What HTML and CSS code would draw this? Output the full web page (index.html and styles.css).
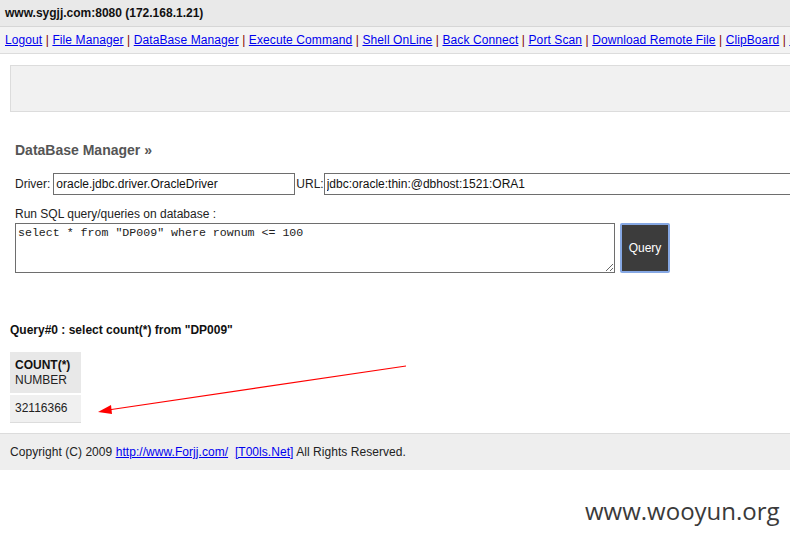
FILE: index.html
```html
<!DOCTYPE html>
<html>
<head>
<meta charset="utf-8">
<link rel="stylesheet" href="styles.css">
</head>
<body>
<div class="topbar">www.sygjj.com:8080 (172.168.1.21)</div>
<div class="nav"><a href="#">Logout</a> <span class="sep">|</span> <a href="#">File Manager</a> <span class="sep">|</span> <a href="#">DataBase Manager</a> <span class="sep">|</span> <a href="#">Execute Command</a> <span class="sep">|</span> <a href="#">Shell OnLine</a> <span class="sep">|</span> <a href="#">Back Connect</a> <span class="sep">|</span> <a href="#">Port Scan</a> <span class="sep">|</span> <a href="#">Download Remote File</a> <span class="sep">|</span> <a href="#">ClipBoard</a> <span class="sep">|</span> <a href="#">Port Map</a></div>
<div class="box"></div>
<div class="form">
  <h2 class="title">DataBase Manager &raquo;</h2>
  <div class="row">
    <label>Driver:</label><input class="in driver" type="text" value="oracle.jdbc.driver.OracleDriver"><label>URL:</label><input class="in url" type="text" value="jdbc:oracle:thin:@dbhost:1521:ORA1">
  </div>
  <div class="label">Run SQL query/queries on database :</div>
  <div class="sqlrow">
    <textarea class="sql">select * from "DP009" where rownum &lt;= 100</textarea>
    <button class="btn">Query</button>
  </div>
</div>
<div class="result">
  <div class="qtitle">Query#0 : select count(*) from "DP009"</div>
  <table class="grid">
    <tr><th><b>COUNT(*)</b><br><span class="type">NUMBER</span></th></tr>
    <tr><td>32116366</td></tr>
  </table>
</div>
<div class="footer">Copyright (C) 2009 <a href="#">http://www.Forjj.com/</a>&nbsp; <a href="#">[T00ls.Net]</a> All Rights Reserved.</div>
<svg class="arrow" width="790" height="541" viewBox="0 0 790 541">
  <line x1="406" y1="366" x2="108" y2="410" stroke="#ff0000" stroke-width="1.2"/>
  <polygon points="98,412 111,405 112,414" fill="#ff0000"/>
</svg>
<div class="watermark">www.wooyun.org</div>
</body>
</html>
```
FILE: styles.css
```css
html, body {
  margin: 0;
  padding: 0;
  background: #fff;
  overflow: hidden;
}
body {
  font-family: "Liberation Sans", Arial, sans-serif;
  font-size: 12px;
  color: #222;
  width: 790px;
  height: 541px;
  position: relative;
}
.topbar {
  height: 26px;
  line-height: 26px;
  padding-left: 5px;
  background: #e9e9e9;
  border-bottom: 1px solid #d6d6d6;
  font-weight: bold;
  color: #111;
  white-space: nowrap;
}
.nav {
  height: 26px;
  line-height: 27px;
  padding-left: 5px;
  background: #f3f3f3;
  border-bottom: 1px solid #dcdcdc;
  white-space: nowrap;
  overflow: hidden;
  letter-spacing: 0.1px;
}
a {
  color: #0000ee;
  text-decoration: underline;
}
.sep {
  color: #800000;
}
.box {
  margin: 11px 0 0 10px;
  height: 45px;
  background: #f1f1f1;
  border: 1px solid #dcdcdc;
  border-right: none;
}
.form {
  padding-left: 15px;
}
.title {
  margin: 30px 0 0 0;
  font-size: 14px;
  line-height: 16px;
  font-weight: bold;
  color: #555;
}
.row {
  margin-top: 15px;
  display: flex;
  align-items: center;
  white-space: nowrap;
  height: 22px;
  overflow: hidden;
}
.row label {
  color: #222;
  flex: none;
}
.in {
  box-sizing: border-box;
  height: 22px;
  border: 1px solid #6e6e6e;
  font-family: "Liberation Sans", Arial, sans-serif;
  font-size: 12px;
  padding: 0 2px;
  color: #111;
  background: #fff;
  flex: none;
}
.driver {
  width: 242px;
  margin-left: 3px;
  margin-right: 1px;
}
.url {
  width: 520px;
}
.label {
  margin-top: 12px;
  line-height: 14px;
}
.sqlrow {
  margin-top: 2px;
  display: flex;
  gap: 5px;
}
.sql {
  box-sizing: border-box;
  width: 600px;
  height: 50px;
  border: 1px solid #6e6e6e;
  font-family: "Liberation Mono", "Courier New", monospace;
  font-size: 11.6px;
  padding: 2px 2px;
  margin: 0;
  resize: both;
  color: #222;
}
.btn {
  box-sizing: border-box;
  width: 50px;
  height: 50px;
  background: #3c3c3c;
  color: #fff;
  border: 2px solid #86a8e4;
  border-radius: 2px;
  font-family: "Liberation Sans", Arial, sans-serif;
  font-size: 12px;
  padding: 0;
  margin: 0;
}
.result {
  padding-left: 10px;
}
.qtitle {
  margin-top: 50px;
  font-weight: bold;
  line-height: 14px;
  color: #111;
}
.grid {
  margin-top: 15px;
  border-collapse: separate;
  border-spacing: 0;
}
.grid th {
  background: #e8e8e8;
  text-align: left;
  font-weight: normal;
  padding: 6px 5px 5px 5px;
  line-height: 15px;
  width: 61px;
  border-bottom: 2px solid #fff;
  color: #111;
}
.grid th .type {
  color: #222;
}
.grid td {
  background: #f0f0f0;
  padding: 6px 5px 6px 5px;
  line-height: 15px;
  border-bottom: 1px solid #dcdcdc;
  color: #222;
}
.footer {
  margin-top: 10px;
  height: 36px;
  line-height: 36px;
  padding-left: 10px;
  background: #eeeeee;
  border-top: 1px solid #dcdcdc;
  color: #222;
  white-space: nowrap;
  letter-spacing: 0.05px;
}
.arrow {
  position: absolute;
  left: 0;
  top: 0;
  pointer-events: none;
}
.watermark {
  position: absolute;
  left: 585px;
  top: 495px;
  font-family: "Open Sans", "Noto Sans", sans-serif;
  font-size: 24px;
  line-height: 32px;
  color: #3a3a3a;
  white-space: nowrap;
}
```
